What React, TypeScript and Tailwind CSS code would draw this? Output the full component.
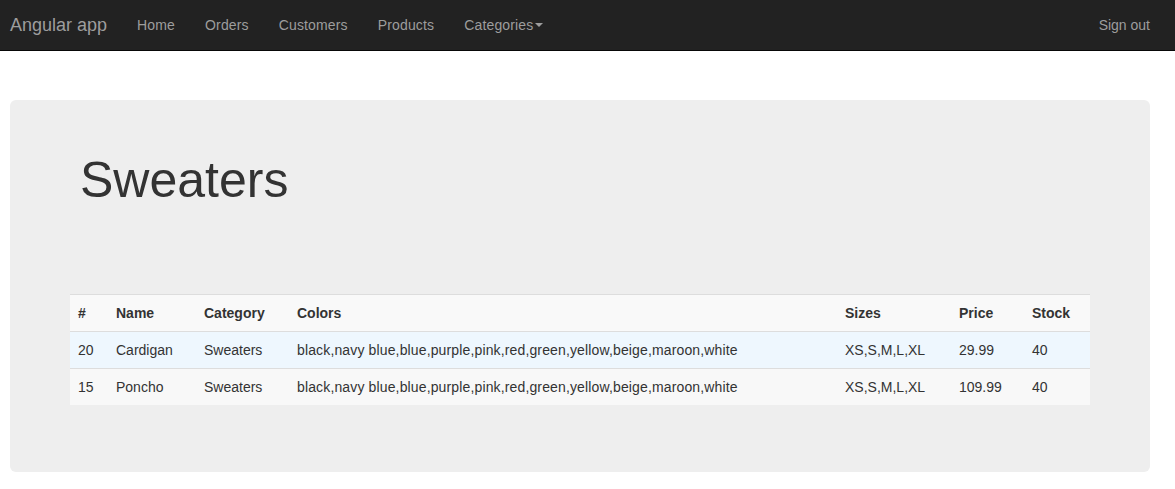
import React from "react";

interface Product {
  id: number;
  name: string;
  category: string;
  colors: string;
  sizes: string;
  price: string;
  stock: number;
}

const products: Product[] = [
  {
    id: 20,
    name: "Cardigan",
    category: "Sweaters",
    colors: "black,navy blue,blue,purple,pink,red,green,yellow,beige,maroon,white",
    sizes: "XS,S,M,L,XL",
    price: "29.99",
    stock: 40,
  },
  {
    id: 15,
    name: "Poncho",
    category: "Sweaters",
    colors: "black,navy blue,blue,purple,pink,red,green,yellow,beige,maroon,white",
    sizes: "XS,S,M,L,XL",
    price: "109.99",
    stock: 40,
  },
];

const navLinks = ["Home", "Orders", "Customers", "Products"];

const App: React.FC = () => {
  return (
    <div className="min-h-screen bg-white font-['Liberation_Sans',Arial,sans-serif] text-[14px] text-[#333]">
      <nav className="flex h-[51px] items-start border-b border-[#080808] bg-[#222] pl-[10px] pr-[10px]">
        <a className="py-[15px] pr-[15px] text-[18px] leading-[20px] text-[#9d9d9d]">Angular app</a>
        <ul className="flex tracking-[0.15px]">
          {navLinks.map((link) => (
            <li key={link}>
              <a className="block px-[15px] py-[15px] leading-[20px] text-[#9d9d9d]">{link}</a>
            </li>
          ))}
          <li>
            <a className="flex items-center px-[15px] py-[15px] leading-[20px] text-[#9d9d9d]">
              Categories
              <span className="ml-[2px] inline-block h-0 w-0 border-x-[4px] border-t-[4px] border-x-transparent border-t-[#9d9d9d]" />
            </a>
          </li>
        </ul>
        <a className="ml-auto px-[15px] py-[15px] leading-[20px] text-[#9d9d9d]">Sign out</a>
      </nav>

      <div className="ml-[10px] mt-[49px] w-[1140px] rounded-[6px] bg-[#eee] px-[60px] pb-[67px] pt-[53px]">
        <h1 className="ml-[10px] text-[50px] leading-[55px] text-[#333]">Sweaters</h1>

        <table className="mt-[86px] w-[1020px] table-fixed border-collapse">
          <colgroup>
            <col className="w-[38px]" />
            <col className="w-[88px]" />
            <col className="w-[93px]" />
            <col className="w-[548px]" />
            <col className="w-[114px]" />
            <col className="w-[73px]" />
            <col className="w-[66px]" />
          </colgroup>
          <thead>
            <tr className="bg-[#f9f9f9]">
              {["#", "Name", "Category", "Colors", "Sizes", "Price", "Stock"].map((h) => (
                <th
                  key={h}
                  className="border-t border-[#ddd] p-[8px] text-left font-bold leading-[20px]"
                >
                  {h}
                </th>
              ))}
            </tr>
          </thead>
          <tbody>
            {products.map((p, i) => (
              <tr key={p.id} className={i === 0 ? "bg-[#eef7fe]" : "bg-[#f8f8f8]"}>
                <td className="border-t border-[#ddd] p-[8px] leading-[20px]">{p.id}</td>
                <td className="border-t border-[#ddd] p-[8px] leading-[20px]">{p.name}</td>
                <td className="border-t border-[#ddd] p-[8px] leading-[20px]">{p.category}</td>
                <td className="border-t border-[#ddd] p-[8px] leading-[20px] tracking-[0.14px]">{p.colors}</td>
                <td className="border-t border-[#ddd] p-[8px] leading-[20px]">{p.sizes}</td>
                <td className="border-t border-[#ddd] p-[8px] leading-[20px]">{p.price}</td>
                <td className="border-t border-[#ddd] p-[8px] leading-[20px]">{p.stock}</td>
              </tr>
            ))}
          </tbody>
        </table>
      </div>
    </div>
  );
};

export default App;
